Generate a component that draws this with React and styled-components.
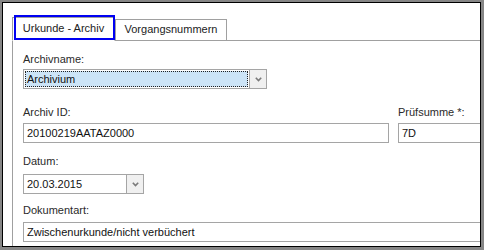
import React from "react"
import styled, { createGlobalStyle } from "styled-components"

const GlobalStyle = createGlobalStyle`
  html, body {
    margin: 0;
    padding: 0;
    background: #ffffff;
  }
  body {
    font-family: "Liberation Sans", Arial, sans-serif;
    font-size: 11px;
  }
`

const Frame = styled.div`
  width: 484px;
  height: 250px;
  box-sizing: border-box;
  padding: 2px 3px 3px 2px;
  background: #868686;
`

const Window = styled.div`
  height: 100%;
  box-sizing: border-box;
  border: 1px solid #000;
  background: #fff;
  overflow: hidden;
  padding: 14px 0 0 9px;
`

const TabBar = styled.div`
  display: flex;
  align-items: flex-end;
  width: 520px;
`

const Tab = styled.div`
  position: relative;
  box-sizing: border-box;
  width: ${p => (p.$active ? 103 : 112)}px;
  height: ${p => (p.$active ? 24 : 22)}px;
  padding-top: ${p => (p.$active ? 4 : 3)}px;
  border: 1px solid #a0a0a0;
  border-bottom-color: ${p => (p.$active ? "#fff" : "#a0a0a0")};
  margin-right: ${p => (p.$active ? 0 : 0)}px;
  text-align: center;
  line-height: 13px;
  color: #222;
  background: #fff;
  white-space: nowrap;
`

const FocusMark = styled.div`
  position: absolute;
  left: 1px;
  top: -3px;
  width: 101px;
  height: 25px;
  box-sizing: border-box;
  border: 2px solid #0000f2;
`

const TabFill = styled.div`
  flex: 1;
  border-bottom: 1px solid #a0a0a0;
`

const Panel = styled.div`
  width: 520px;
  height: 220px;
  box-sizing: border-box;
  border-left: 1px solid #a0a0a0;
  padding: 12px 0 0 10px;
`

const Field = styled.div`
  display: flex;
  flex-direction: column;
  margin-top: ${p => p.$top || 0}px;
`

const Label = styled.div`
  line-height: 13px;
  height: 13px;
  color: #2a2a2a;
  margin-bottom: ${p => p.$gap}px;
  white-space: nowrap;
`

const Columns = styled.div`
  display: grid;
  grid-template-columns: 366px 120px;
  column-gap: 9px;
`

const Input = styled.div`
  box-sizing: border-box;
  width: ${p => (p.$width ? `${p.$width}px` : "100%")};
  height: 20px;
  border: 1px solid #a5a5a5;
  padding: 0 3px;
  line-height: 18px;
  color: #111;
  background: #fff;
  white-space: nowrap;
  overflow: hidden;
`

const Combo = styled.div`
  display: flex;
  box-sizing: border-box;
  width: ${p => p.$width}px;
  height: 20px;
  border: 1px solid #a5a5a5;
  background: #fff;
`

const ComboValue = styled.div`
  flex: 1;
  padding: ${p => (p.$selected ? "1px" : "0")};
  display: flex;
`

const ComboText = styled.div`
  flex: 1;
  box-sizing: border-box;
  padding-left: ${p => (p.$selected ? 1 : 3)}px;
  line-height: ${p => (p.$selected ? 14 : 18)}px;
  color: #111;
  background: ${p => (p.$selected ? "#cce4f7" : "#fff")};
  border: ${p => (p.$selected ? "1px dotted #222" : "none")};
`

const DropButton = styled.div`
  width: 16px;
  border-left: 1px solid #a5a5a5;
  background: #f0f0f0;
  display: flex;
  align-items: center;
  justify-content: center;
`

const Chevron = () => (
  <svg width="7" height="5" viewBox="0 0 7 5">
    <polyline
      points="0.8,0.8 3.5,3.6 6.2,0.8"
      fill="none"
      stroke="#7a7a7a"
      strokeWidth="1.6"
    />
  </svg>
)

const ComboBox = ({ width, value, selected }) => (
  <Combo $width={width}>
    <ComboValue $selected={selected}>
      <ComboText $selected={selected}>{value}</ComboText>
    </ComboValue>
    <DropButton>
      <Chevron />
    </DropButton>
  </Combo>
)

const App = () => (
  <>
    <GlobalStyle />
    <Frame>
      <Window>
        <TabBar>
          <Tab $active>
            Urkunde - Archiv
            <FocusMark />
          </Tab>
          <Tab>Vorgangsnummern</Tab>
          <TabFill />
        </TabBar>
        <Panel>
          <Field>
            <Label $gap={3}>Archivname:</Label>
            <ComboBox width={244} value="Archivium" selected />
          </Field>

          <Columns>
            <Field $top={17}>
              <Label $gap={4}>Archiv ID:</Label>
              <Input>20100219AATAZ0000</Input>
            </Field>
            <Field $top={17}>
              <Label $gap={4}>Prüfsumme *:</Label>
              <Input>7D</Input>
            </Field>
          </Columns>

          <Field $top={12}>
            <Label $gap={6}>Datum:</Label>
            <ComboBox width={121} value="20.03.2015" />
          </Field>

          <Field $top={10}>
            <Label $gap={5}>Dokumentart:</Label>
            <Input $width={480}>Zwischenurkunde/nicht verbüchert</Input>
          </Field>
        </Panel>
      </Window>
    </Frame>
  </>
)

export default App
